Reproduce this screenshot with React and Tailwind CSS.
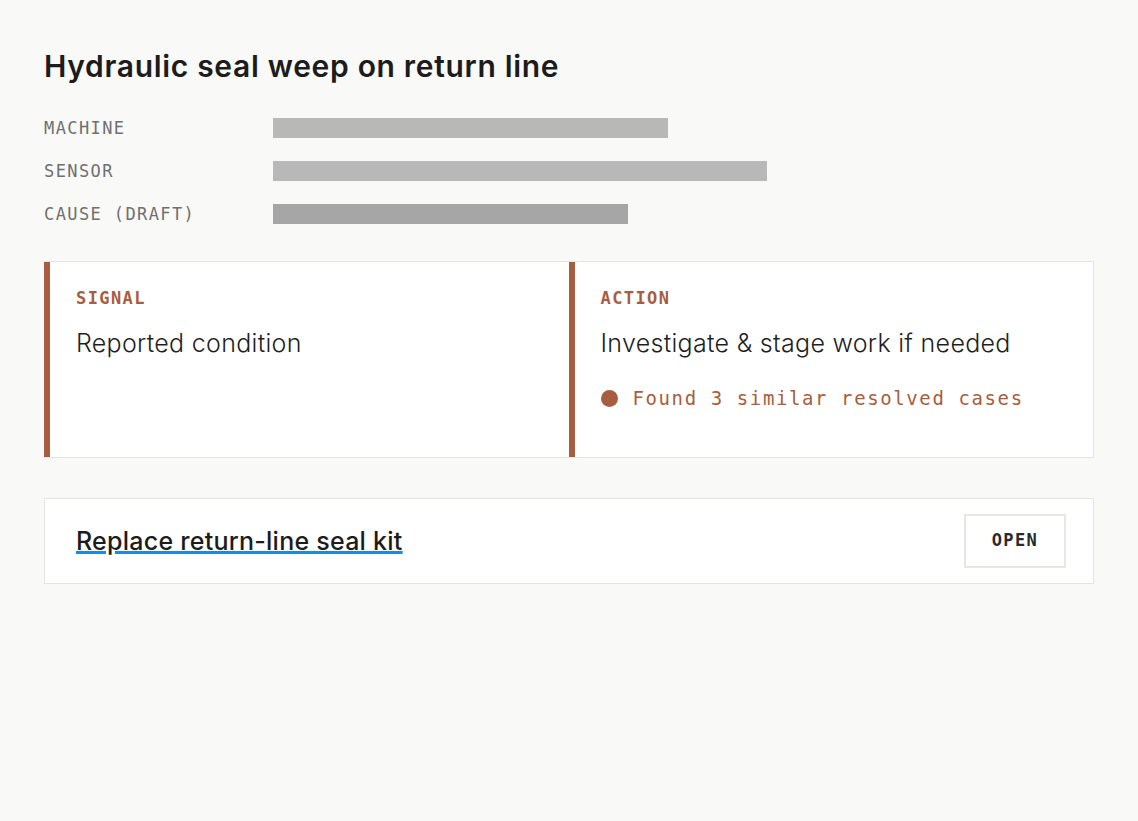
import React from 'react';

const mono = "font-['DejaVu_Sans_Mono',monospace]";
const sans = "font-['Inter',sans-serif]";

const rows = [
  { label: 'MACHINE', width: 'w-[395px]', tone: 'bg-[#b8b8b8]' },
  { label: 'SENSOR', width: 'w-[494px]', tone: 'bg-[#b8b8b8]' },
  { label: 'CAUSE (DRAFT)', width: 'w-[355px]', tone: 'bg-[#a6a6a6]' },
];

const Panel = ({ tag, text, children }) => (
  <div className="flex min-h-[195px] flex-col border-l-[6px] border-l-[#a75e40] pl-[26px] pr-6 pt-[25px]">
    <p className={`${mono} text-[17px] font-bold leading-[22px] tracking-[1.4px] text-[#a75e40]`}>{tag}</p>
    <p className={`${sans} mt-[19px] text-[25px] font-light leading-[30px] tracking-[0.3px] text-[#1f1f1f]`}>{text}</p>
    {children}
  </div>
);

const App = () => (
  <div className="min-h-[821px] w-full bg-[#f9f9f8] px-[44px] pt-[44px] text-[#1f1f1f]">
    <h1 className={`${sans} text-[30px] font-semibold leading-[44px] tracking-[0.68px] text-[#1c1c1c]`}>Hydraulic seal weep on return line</h1>

    <div className="mt-[30px] flex flex-col gap-[23px]">
      {rows.map((r) => (
        <div key={r.label} className="flex h-[20px] items-center">
          <span className={`${mono} w-[229px] shrink-0 text-[17px] leading-[20px] tracking-[1.4px] text-[#707070]`}>{r.label}</span>
          <span className={`h-[20px] ${r.width} ${r.tone}`} />
        </div>
      ))}
    </div>

    <div className="mt-[37px] grid grid-cols-2 border border-[#e4e4e1] border-l-0 bg-white">
      <Panel tag="SIGNAL" text="Reported condition" />
      <Panel tag="ACTION" text="Investigate & stage work if needed">
        <div className="mt-[28px] flex items-center gap-[15px]">
          <span className="h-[17px] w-[17px] shrink-0 rounded-full bg-[#a75e40]" />
          <span className={`${mono} text-[19px] leading-[24px] tracking-[1.6px] text-[#a75e40]`}>Found 3 similar resolved cases</span>
        </div>
      </Panel>
    </div>

    <div className="mt-[40px] flex h-[86px] items-center justify-between border border-[#e4e4e1] bg-white pl-[31px] pr-[27px]">
      <a href="#" className={`${sans} text-[25px] font-medium leading-[30px] tracking-[0.25px] text-[#1c1c1c] underline decoration-[#1e88e5] decoration-[3px] underline-offset-[1px]`}>Replace return-line seal kit</a>
      <button className={`${mono} flex h-[54px] w-[102px] items-center justify-center border-2 border-[#e6e6e3] bg-white text-[17px] font-bold tracking-[1.4px] text-[#2a2a2a]`}>OPEN</button>
    </div>
  </div>
);

export default App;
